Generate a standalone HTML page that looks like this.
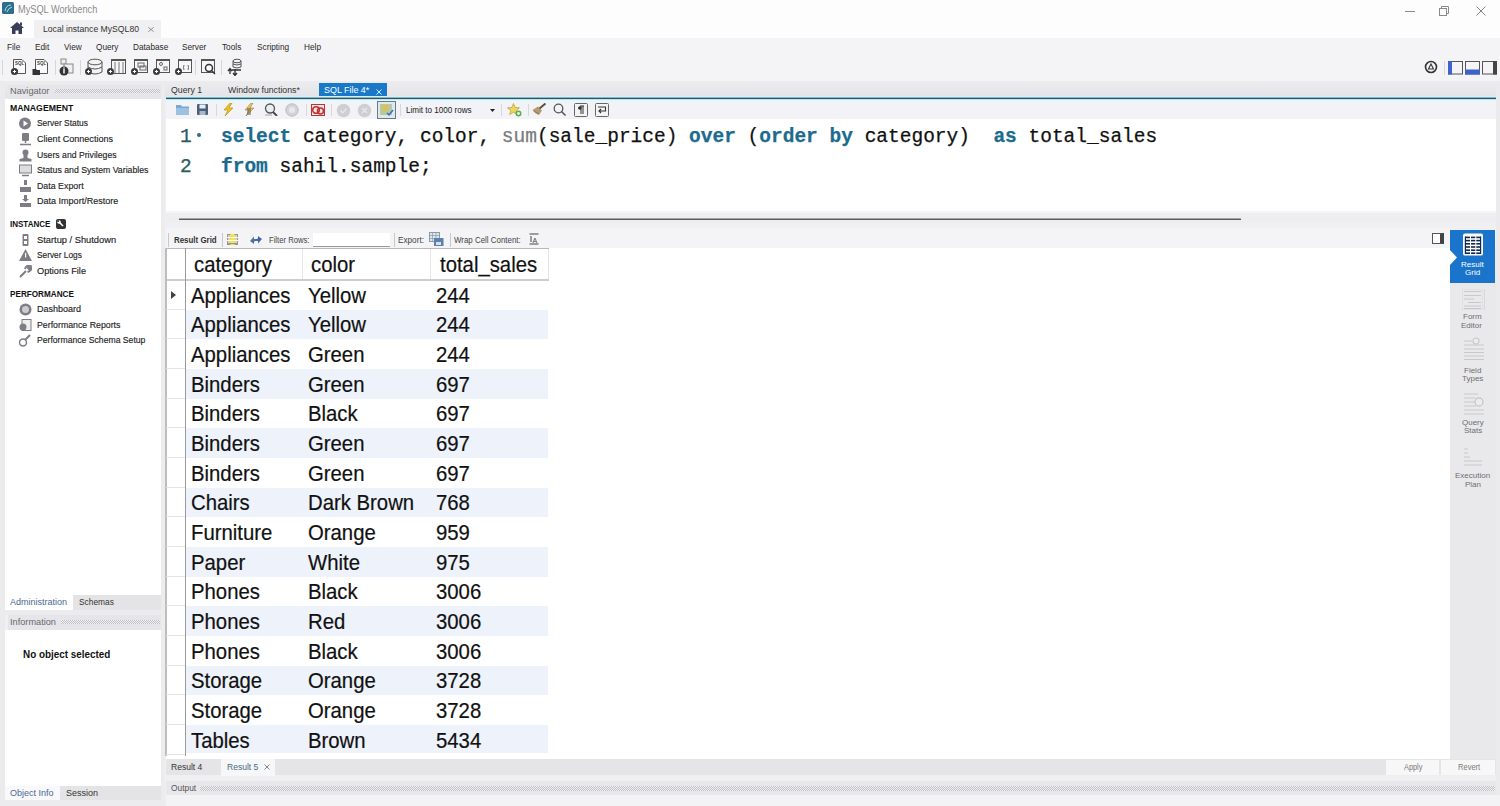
<!DOCTYPE html>
<html><head><meta charset="utf-8"><style>
*{margin:0;padding:0;box-sizing:border-box}
html,body{width:1500px;height:806px;overflow:hidden;background:#f0f0f2;font-family:"Liberation Sans",sans-serif;color:#222}
.a{position:absolute}
.t{position:absolute;white-space:pre;line-height:1}
.mono{font-family:"Liberation Mono",monospace}
.kw{color:#1b6b8e;font-weight:bold}
.fn{color:#7a7a7a}
.g{font-size:21.5px;color:#111;-webkit-text-stroke:0.2px #111;transform:scaleX(0.945);transform-origin:0 0}
.dots{background-image:radial-gradient(circle,#bdbdc2 0.7px,transparent 1px);background-size:3px 3px}
</style></head><body>
<div class="a" style="left:0px;top:0px;width:1500px;height:38px;background:#fdfdfd;"></div>
<svg class="a" style="left:2px;top:2px" width="12" height="12" viewBox="0 0 12 12"><rect x="0" y="0" width="12" height="12" rx="1.5" fill="#2e6e8c"/><path d="M3 9 Q4 3 9 3 M5 10 Q6 6 10 5" stroke="#bfe" stroke-width="0.8" fill="none"/></svg>
<div class="t" style="left:18px;top:4.5px;font-size:10px;color:#8a8a8a;transform:scaleX(0.92);transform-origin:0 0">MySQL Workbench</div>
<div class="a" style="left:1405px;top:11px;width:10px;height:1px;background:#8a8a8a;"></div>
<svg class="a" style="left:1439px;top:6px" width="10" height="10" viewBox="0 0 10 10"><rect x="0.5" y="2.5" width="7" height="7" fill="none" stroke="#8a8a8a"/><path d="M2.5 2.5 V0.5 H9.5 V7.5 H7.5" fill="none" stroke="#8a8a8a"/></svg>
<svg class="a" style="left:1476px;top:6px" width="10" height="10" viewBox="0 0 10 10"><path d="M0.5 0.5 L9.5 9.5 M9.5 0.5 L0.5 9.5" stroke="#808080" stroke-width="1"/></svg>
<div class="a" style="left:34px;top:20px;width:127px;height:19px;background:#f0f0f2;"></div>
<svg class="a" style="left:10px;top:22px" width="14" height="12" viewBox="0 0 14 12"><path d="M7 0 L14 6 L12 6 L12 12 L8.5 12 L8.5 8.5 L5.5 8.5 L5.5 12 L2 12 L2 6 L0 6 Z" fill="#3a3d5a"/><rect x="10" y="0.5" width="2" height="3" fill="#3a3d5a"/></svg>
<div class="t" style="left:43px;top:24px;font-size:9.6px;color:#333;transform:scaleX(0.9);transform-origin:0 0">Local instance MySQL80</div>
<svg class="a" style="left:148px;top:27px" width="6" height="5" viewBox="0 0 6 5"><path d="M0.3 0.3 L5.7 4.7 M5.7 0.3 L0.3 4.7" stroke="#888" stroke-width="0.9"/></svg>
<div class="a" style="left:0px;top:38px;width:1500px;height:43px;background:#f4f4f6;"></div>
<div class="t" style="left:6.5px;top:42px;font-size:9.6px;color:#2a2a2a;transform:scaleX(0.86);transform-origin:0 0">File</div>
<div class="t" style="left:34.5px;top:42px;font-size:9.6px;color:#2a2a2a;transform:scaleX(0.86);transform-origin:0 0">Edit</div>
<div class="t" style="left:63.5px;top:42px;font-size:9.6px;color:#2a2a2a;transform:scaleX(0.86);transform-origin:0 0">View</div>
<div class="t" style="left:95.5px;top:42px;font-size:9.6px;color:#2a2a2a;transform:scaleX(0.86);transform-origin:0 0">Query</div>
<div class="t" style="left:133px;top:42px;font-size:9.6px;color:#2a2a2a;transform:scaleX(0.86);transform-origin:0 0">Database</div>
<div class="t" style="left:182px;top:42px;font-size:9.6px;color:#2a2a2a;transform:scaleX(0.86);transform-origin:0 0">Server</div>
<div class="t" style="left:222px;top:42px;font-size:9.6px;color:#2a2a2a;transform:scaleX(0.86);transform-origin:0 0">Tools</div>
<div class="t" style="left:257px;top:42px;font-size:9.6px;color:#2a2a2a;transform:scaleX(0.86);transform-origin:0 0">Scripting</div>
<div class="t" style="left:304px;top:42px;font-size:9.6px;color:#2a2a2a;transform:scaleX(0.86);transform-origin:0 0">Help</div>
<div class="a" style="left:2px;top:60px;width:1px;height:15px;background:#d6d6d8;"></div>
<div class="a" style="left:55px;top:60px;width:1px;height:15px;background:#d6d6d8;"></div>
<div class="a" style="left:80px;top:60px;width:1px;height:15px;background:#d6d6d8;"></div>
<div class="a" style="left:195px;top:60px;width:1px;height:15px;background:#d6d6d8;"></div>
<div class="a" style="left:221px;top:60px;width:1px;height:15px;background:#d6d6d8;"></div>
<svg class="a" style="left:10px;top:58px" width="20" height="18" viewBox="0 0 20 18"><path d="M3.5 1.5 H12 L15.5 5 V15.5 H3.5 Z" fill="#fafafa" stroke="#555" stroke-width="1"/><text x="5" y="7" font-size="4.5" font-family="Liberation Sans" font-weight="bold" fill="#444">SQL</text><circle cx="4.5" cy="13.5" r="3.6" fill="#3c3c3c"/><path d="M2.9 13.5 H6.1 M4.5 11.9 V15.1" stroke="#fff" stroke-width="1"/></svg>
<svg class="a" style="left:32px;top:58px" width="20" height="18" viewBox="0 0 20 18"><path d="M3.5 1.5 H12 L15.5 5 V15.5 H3.5 Z" fill="#fafafa" stroke="#555" stroke-width="1"/><text x="5" y="7" font-size="4.5" font-family="Liberation Sans" font-weight="bold" fill="#444">SQL</text><path d="M0.5 11 H4 L5 12 H8 V17 H0.5 Z" fill="#333"/></svg>
<svg class="a" style="left:58px;top:58px" width="20" height="18" viewBox="0 0 20 18"><rect x="3" y="1" width="5" height="5" fill="#eee" stroke="#888"/><rect x="6" y="6" width="9" height="9" fill="#eee" stroke="#888"/><circle cx="6" cy="13" r="4.5" fill="#333"/><path d="M6 11 V15.5" stroke="#fff" stroke-width="1.4"/><circle cx="6" cy="10" r="0.8" fill="#fff"/></svg>
<svg class="a" style="left:84px;top:58px" width="20" height="18" viewBox="0 0 20 18"><ellipse cx="11" cy="4" rx="7" ry="2.8" fill="#f3f3f3" stroke="#555"/><path d="M4 4 V14 Q11 18 18 14 V4 M4 9 Q11 13 18 9" fill="none" stroke="#555"/><circle cx="4.5" cy="13.5" r="3.5" fill="#3c3c3c"/><path d="M2.9 13.5 H6.1 M4.5 11.9 V15.1" stroke="#fff" stroke-width="1"/></svg>
<svg class="a" style="left:106px;top:58px" width="20" height="18" viewBox="0 0 20 18"><rect x="5.5" y="1.5" width="14" height="14" fill="#f6f6f6" stroke="#555"/><rect x="5" y="1" width="15" height="2" fill="#555"/><path d="M9 4 V15 M13 4 V15 M17 4 V15" stroke="#777"/><circle cx="4.5" cy="13.5" r="3.5" fill="#3c3c3c"/><path d="M2.9 13.5 H6.1 M4.5 11.9 V15.1" stroke="#fff" stroke-width="1"/></svg>
<svg class="a" style="left:130px;top:58px" width="20" height="18" viewBox="0 0 20 18"><rect x="4.5" y="1.5" width="13" height="13" fill="#f6f6f6" stroke="#555"/><rect x="4" y="1" width="14" height="2" fill="#555"/><rect x="8" y="5" width="6" height="4" fill="none" stroke="#666"/><rect x="10" y="8" width="6" height="4" fill="none" stroke="#666"/><circle cx="4.5" cy="13.5" r="3.5" fill="#3c3c3c"/><path d="M2.9 13.5 H6.1 M4.5 11.9 V15.1" stroke="#fff" stroke-width="1"/></svg>
<svg class="a" style="left:152px;top:58px" width="20" height="18" viewBox="0 0 20 18"><rect x="4.5" y="1.5" width="13" height="13" fill="#f6f6f6" stroke="#555"/><rect x="4" y="1" width="14" height="2" fill="#555"/><circle cx="9" cy="6" r="1.5" fill="none" stroke="#666"/><rect x="12" y="9" width="3" height="3" fill="none" stroke="#666"/><circle cx="4.5" cy="13.5" r="3.5" fill="#3c3c3c"/><path d="M2.9 13.5 H6.1 M4.5 11.9 V15.1" stroke="#fff" stroke-width="1"/></svg>
<svg class="a" style="left:174px;top:58px" width="20" height="18" viewBox="0 0 20 18"><rect x="4.5" y="1.5" width="13" height="13" fill="#f6f6f6" stroke="#555"/><rect x="4" y="1" width="14" height="2" fill="#555"/><path d="M10 7 Q9 9.5 10 12 M14 7 Q15 9.5 14 12" fill="none" stroke="#666"/><circle cx="4.5" cy="13.5" r="3.5" fill="#3c3c3c"/><path d="M2.9 13.5 H6.1 M4.5 11.9 V15.1" stroke="#fff" stroke-width="1"/></svg>
<svg class="a" style="left:200px;top:58px" width="18" height="18" viewBox="0 0 18 18"><rect x="1.5" y="1.5" width="13" height="13" fill="#f6f6f6" stroke="#555"/><rect x="1" y="1" width="14" height="2" fill="#555"/><circle cx="9" cy="10" r="3.5" fill="#fff" stroke="#333" stroke-width="1.5"/><path d="M11.5 12.5 L15 16" stroke="#333" stroke-width="1.5"/></svg>
<svg class="a" style="left:225px;top:58px" width="20" height="18" viewBox="0 0 20 18"><ellipse cx="12" cy="3" rx="4" ry="1.8" fill="#f3f3f3" stroke="#555"/><path d="M8 3 V9 Q12 11 16 9 V3 M8 6 Q12 8 16 6" fill="none" stroke="#555"/><path d="M3 13 L5 10.5 L7 13 M5 11 V16 M7 12 H16 M8 15 L10 17.5 L12 15 M10 11 V17" stroke="#333" stroke-width="1.3" fill="none"/></svg>
<svg class="a" style="left:1424px;top:60px" width="14" height="14" viewBox="0 0 14 14"><circle cx="7" cy="7" r="5.5" fill="none" stroke="#333" stroke-width="1.6"/><path d="M4.5 9 H9.5 L7 4 Z" fill="none" stroke="#333" stroke-width="1.1"/></svg>
<div class="a" style="left:1444px;top:61px;width:1px;height:14px;background:#d8d8d8;"></div>
<svg class="a" style="left:1448px;top:61px" width="16" height="14" viewBox="0 0 16 14"><rect x="0.5" y="0.5" width="14" height="12.5" fill="#f4f4f8" stroke="#555"/><rect x="0" y="0" width="4" height="13.5" fill="#3b63c9"/></svg>
<svg class="a" style="left:1465px;top:61px" width="16" height="14" viewBox="0 0 16 14"><rect x="0.5" y="0.5" width="14" height="12.5" fill="#f4f4f8" stroke="#555"/><rect x="0" y="8.5" width="15" height="5" fill="#3b63c9"/></svg>
<svg class="a" style="left:1482px;top:61px" width="16" height="14" viewBox="0 0 16 14"><rect x="0.5" y="0.5" width="14" height="12.5" fill="#f4f4f8" stroke="#555"/><rect x="11" y="0" width="4" height="13.5" fill="#444"/></svg>
<div class="a" style="left:0px;top:81px;width:1500px;height:17px;background:linear-gradient(#ececef,#e4e4e8);"></div>
<div class="a" style="left:0px;top:81px;width:5px;height:725px;background:#ebebee;"></div>
<div class="a" style="left:8px;top:85px;width:153px;height:14px;background:#e6e6ea;"></div>
<div class="t" style="left:10px;top:87px;font-size:9.2px;color:#686868;">Navigator</div>
<div class="a" style="left:55px;top:89px;width:105px;height:4px;background:transparent;background-image:repeating-conic-gradient(#c2c2c6 0 25%,#f0f0f2 0 50%);background-size:2px 2px"></div>
<div class="a" style="left:5px;top:99px;width:156px;height:496px;background:#ffffff;"></div>
<div class="t" style="left:10px;top:104.0px;font-size:8.8px;color:#111;font-weight:bold;transform:scaleX(0.99);transform-origin:0 0">MANAGEMENT</div>
<div class="t" style="left:37px;top:119.3px;font-size:9.3px;color:#1e1e1e;-webkit-text-stroke:0.15px #1e1e1e;transform:scaleX(0.905);transform-origin:0 0">Server Status</div>
<svg class="a" style="left:19px;top:117px" width="13" height="13" viewBox="0 0 13 13"><circle cx="6" cy="6.5" r="6" fill="#7d7d86"/><path d="M4.5 3.5 L9 6.5 L4.5 9.5 Z" fill="#fff"/></svg>
<div class="t" style="left:37px;top:135.3px;font-size:9.3px;color:#1e1e1e;-webkit-text-stroke:0.15px #1e1e1e;transform:scaleX(0.974);transform-origin:0 0">Client Connections</div>
<svg class="a" style="left:19px;top:133px" width="13" height="13" viewBox="0 0 13 13"><rect x="3" y="0" width="7" height="8" rx="1" fill="#7d7d86"/><path d="M6.5 8 V10 M1 11.5 H12" stroke="#7d7d86" stroke-width="1.5"/></svg>
<div class="t" style="left:37px;top:150.8px;font-size:9.3px;color:#1e1e1e;-webkit-text-stroke:0.15px #1e1e1e;transform:scaleX(0.933);transform-origin:0 0">Users and Privileges</div>
<svg class="a" style="left:19px;top:148.5px" width="13" height="13" viewBox="0 0 13 13"><circle cx="6.5" cy="3.5" r="3" fill="#7d7d86"/><path d="M4.5 6 V9 L0.5 10 V12.5 H12.5 V10 L8.5 9 V6 Z" fill="#7d7d86"/></svg>
<div class="t" style="left:37px;top:166.3px;font-size:9.3px;color:#1e1e1e;-webkit-text-stroke:0.15px #1e1e1e;transform:scaleX(0.939);transform-origin:0 0">Status and System Variables</div>
<svg class="a" style="left:19px;top:164px" width="13" height="13" viewBox="0 0 13 13"><rect x="0.5" y="1" width="12" height="8" fill="#ddd" stroke="#7d7d86"/><path d="M3 11.5 H10" stroke="#7d7d86" stroke-width="1.5"/></svg>
<div class="t" style="left:37px;top:181.8px;font-size:9.3px;color:#1e1e1e;-webkit-text-stroke:0.15px #1e1e1e;transform:scaleX(0.949);transform-origin:0 0">Data Export</div>
<svg class="a" style="left:19px;top:179.5px" width="13" height="13" viewBox="0 0 13 13"><path d="M5 0 H8 V5 H5 Z M1 7 H12 V12 H1 Z" fill="#7d7d86"/></svg>
<div class="t" style="left:37px;top:197.3px;font-size:9.3px;color:#1e1e1e;-webkit-text-stroke:0.15px #1e1e1e;transform:scaleX(0.971);transform-origin:0 0">Data Import/Restore</div>
<svg class="a" style="left:19px;top:195px" width="13" height="13" viewBox="0 0 13 13"><path d="M5 0 H8 V4 H10 L6.5 7 L3 4 H5 Z M1 8 H12 V12 H1 Z" fill="#7d7d86"/></svg>
<div class="t" style="left:10px;top:220.0px;font-size:8.8px;color:#111;font-weight:bold;transform:scaleX(0.911);transform-origin:0 0">INSTANCE</div>
<svg class="a" style="left:56px;top:219px" width="10" height="10" viewBox="0 0 10 10"><rect x="0" y="0" width="10" height="10" rx="2" fill="#333"/><path d="M2.5 2.5 L7 7" stroke="#fff" stroke-width="1.6"/><circle cx="3" cy="3" r="1.8" fill="#fff"/><circle cx="2.2" cy="2.2" r="0.9" fill="#333"/></svg>
<div class="t" style="left:37px;top:235.8px;font-size:9.3px;color:#1e1e1e;-webkit-text-stroke:0.15px #1e1e1e;transform:scaleX(1.0);transform-origin:0 0">Startup / Shutdown</div>
<svg class="a" style="left:19px;top:233.5px" width="13" height="13" viewBox="0 0 13 13"><rect x="3.5" y="0" width="6" height="12" rx="1" fill="#7d7d86"/><rect x="5" y="2" width="3" height="3" fill="#fff"/><rect x="5" y="7" width="3" height="3" fill="#fff"/></svg>
<div class="t" style="left:37px;top:251.3px;font-size:9.3px;color:#1e1e1e;-webkit-text-stroke:0.15px #1e1e1e;transform:scaleX(0.895);transform-origin:0 0">Server Logs</div>
<svg class="a" style="left:19px;top:249px" width="13" height="13" viewBox="0 0 13 13"><path d="M6.5 0 L13 12 H0 Z" fill="#7d7d86"/><rect x="6" y="4" width="1.2" height="4.5" fill="#fff"/></svg>
<div class="t" style="left:37px;top:267.3px;font-size:9.3px;color:#1e1e1e;-webkit-text-stroke:0.15px #1e1e1e;transform:scaleX(0.988);transform-origin:0 0">Options File</div>
<svg class="a" style="left:19px;top:265px" width="13" height="13" viewBox="0 0 13 13"><path d="M1 12 L7 6 M6 4 Q7 0 11 1 L9 3 L10 4 L12 2 Q13 6 8.5 7" stroke="#7d7d86" stroke-width="2" fill="none"/></svg>
<div class="t" style="left:10px;top:289.5px;font-size:8.8px;color:#111;font-weight:bold;transform:scaleX(0.928);transform-origin:0 0">PERFORMANCE</div>
<div class="t" style="left:37px;top:305.3px;font-size:9.3px;color:#1e1e1e;-webkit-text-stroke:0.15px #1e1e1e;transform:scaleX(0.969);transform-origin:0 0">Dashboard</div>
<svg class="a" style="left:19px;top:303px" width="13" height="13" viewBox="0 0 13 13"><circle cx="6.5" cy="6.5" r="6" fill="#7d7d86"/><circle cx="6.5" cy="6.5" r="3.5" fill="#ccc"/></svg>
<div class="t" style="left:37px;top:320.8px;font-size:9.3px;color:#1e1e1e;-webkit-text-stroke:0.15px #1e1e1e;transform:scaleX(0.944);transform-origin:0 0">Performance Reports</div>
<svg class="a" style="left:19px;top:318.5px" width="13" height="13" viewBox="0 0 13 13"><rect x="3" y="0.5" width="9" height="11" fill="#eee" stroke="#7d7d86"/><circle cx="4" cy="8" r="3.5" fill="#7d7d86"/></svg>
<div class="t" style="left:37px;top:336.3px;font-size:9.3px;color:#1e1e1e;-webkit-text-stroke:0.15px #1e1e1e;transform:scaleX(0.928);transform-origin:0 0">Performance Schema Setup</div>
<svg class="a" style="left:19px;top:334px" width="13" height="13" viewBox="0 0 13 13"><circle cx="4" cy="8.5" r="3.5" fill="none" stroke="#7d7d86" stroke-width="1.5"/><path d="M6 6 L11 1" stroke="#7d7d86" stroke-width="2"/></svg>
<div class="a" style="left:5px;top:595px;width:156px;height:15px;background:#e4e4e6;"></div>
<div class="a" style="left:5px;top:595px;width:68px;height:15px;background:#ffffff;"></div>
<div class="t" style="left:10px;top:598px;font-size:9px;color:#4a6890;transform:scaleX(1.0);transform-origin:0 0">Administration</div>
<div class="t" style="left:79px;top:598px;font-size:9px;color:#333;transform:scaleX(0.93);transform-origin:0 0">Schemas</div>
<div class="a" style="left:0px;top:610px;width:161px;height:5px;background:#ebebee;"></div>
<div class="a" style="left:8px;top:615px;width:153px;height:15px;background:#e6e6ea;"></div>
<div class="t" style="left:10px;top:618px;font-size:9.2px;color:#686868;">Information</div>
<div class="a" style="left:61px;top:620px;width:99px;height:4px;background:transparent;background-image:repeating-conic-gradient(#c2c2c6 0 25%,#f0f0f2 0 50%);background-size:2px 2px"></div>
<div class="a" style="left:5px;top:630px;width:156px;height:156px;background:#ffffff;"></div>
<div class="t" style="left:23px;top:649.5px;font-size:10.2px;color:#111;font-weight:bold;transform:scaleX(0.97);transform-origin:0 0">No object selected</div>
<div class="a" style="left:5px;top:786px;width:156px;height:14px;background:#e4e4e6;"></div>
<div class="a" style="left:5px;top:786px;width:55px;height:14px;background:#f9f9fb;"></div>
<div class="t" style="left:10px;top:789px;font-size:9px;color:#4a6890;">Object Info</div>
<div class="t" style="left:66px;top:789px;font-size:9px;color:#333;">Session</div>
<div class="a" style="left:0px;top:800px;width:166px;height:6px;background:#ececef;"></div>
<div class="a" style="left:161px;top:81px;width:4px;height:725px;background:#ececee;"></div>
<div class="t" style="left:171px;top:86px;font-size:9.2px;color:#333;transform:scaleX(0.95);transform-origin:0 0">Query 1</div>
<div class="t" style="left:228px;top:86px;font-size:9.2px;color:#333;transform:scaleX(0.95);transform-origin:0 0">Window functions*</div>
<div class="a" style="left:319px;top:83px;width:68px;height:15px;background:#1a78c9;"></div>
<div class="t" style="left:324px;top:86px;font-size:9.2px;color:#ffffff;transform:scaleX(0.97);transform-origin:0 0">SQL File 4*</div>
<svg class="a" style="left:376px;top:88.5px" width="6" height="6" viewBox="0 0 6 6"><path d="M0.5 0.5 L5.5 5.5 M5.5 0.5 L0.5 5.5" stroke="#d8ecff" stroke-width="1"/></svg>
<div class="a" style="left:166px;top:96px;width:1330px;height:1px;background:#d6f0f8;"></div>
<div class="a" style="left:166px;top:97px;width:1330px;height:1px;background:#8fb3c0;"></div>
<div class="a" style="left:166px;top:98px;width:1330px;height:1px;background:#2a5565;"></div>
<div class="a" style="left:166px;top:99px;width:1330px;height:1px;background:#bfe3ee;"></div>
<div class="a" style="left:166px;top:100px;width:1330px;height:2px;background:#e4f7fb;"></div>
<div class="a" style="left:166px;top:102px;width:1330px;height:17px;background:#f3f3f7;"></div>
<div class="a" style="left:1496px;top:81px;width:4px;height:725px;background:#ebebee;"></div>
<svg class="a" style="left:176px;top:104px" width="13" height="11" viewBox="0 0 13 11"><path d="M0 1 H5 L6 2.5 H13 V11 H0 Z" fill="#7aa7cf"/><rect x="0" y="4" width="13" height="7" fill="#9cc1e3"/></svg>
<svg class="a" style="left:197px;top:104px" width="11" height="11" viewBox="0 0 11 11"><rect x="0" y="0" width="11" height="11" rx="1" fill="#4a5f7a"/><rect x="2.5" y="0.5" width="6" height="4" fill="#e6eef6"/><rect x="2.5" y="7" width="6" height="4" fill="#a8b8c8"/></svg>
<div class="a" style="left:216px;top:104px;width:1px;height:12px;background:#d8d8dc;"></div>
<svg class="a" style="left:222px;top:103px" width="13" height="13" viewBox="0 0 13 13"><path d="M8 0 L2 7 H6 L3 13 L11 5 H7 L10 0 Z" fill="#f0c020" stroke="#b08a10" stroke-width="0.6"/></svg>
<svg class="a" style="left:243px;top:103px" width="13" height="13" viewBox="0 0 13 13"><path d="M8 0 L2 7 H6 L3 13 L11 5 H7 L10 0 Z" fill="#e8c860" stroke="#9a8040" stroke-width="0.6"/><path d="M5 5 V12 M7 5 V12" stroke="#555" stroke-width="1"/></svg>
<svg class="a" style="left:264px;top:103px" width="14" height="13" viewBox="0 0 14 13"><circle cx="6" cy="5.5" r="4.5" fill="#e8eef2" stroke="#555" stroke-width="1.3"/><path d="M9 9 L13 13" stroke="#444" stroke-width="1.8"/><path d="M1 12 H8" stroke="#9aa" stroke-width="1"/></svg>
<svg class="a" style="left:285px;top:103px" width="14" height="14" viewBox="0 0 14 14"><circle cx="7" cy="7" r="6.2" fill="#d4d4d8" stroke="#bbb"/><circle cx="7" cy="7" r="3" fill="#e8e8ea"/></svg>
<div class="a" style="left:306px;top:104px;width:1px;height:12px;background:#d8d8dc;"></div>
<svg class="a" style="left:311px;top:104px" width="14" height="12" viewBox="0 0 14 12"><rect x="0.5" y="0.5" width="13" height="11" fill="#f3e6e6" stroke="#b33"/><circle cx="5" cy="6" r="3.3" fill="none" stroke="#c03030" stroke-width="1.6"/><circle cx="9.5" cy="7" r="3" fill="none" stroke="#c03030" stroke-width="1.6"/></svg>
<div class="a" style="left:331px;top:104px;width:1px;height:12px;background:#d8d8dc;"></div>
<svg class="a" style="left:336px;top:103px" width="15" height="15" viewBox="0 0 15 15"><circle cx="7.5" cy="7.5" r="6.8" fill="#cfcfd3"/><path d="M4.5 7.5 L6.8 9.8 L10.5 5.5" stroke="#e8e8e8" stroke-width="1.3" fill="none"/></svg>
<svg class="a" style="left:357px;top:103px" width="15" height="15" viewBox="0 0 15 15"><circle cx="7.5" cy="7.5" r="6.8" fill="#cfcfd3"/><path d="M5 5 L10 10 M10 5 L5 10" stroke="#e8e8e8" stroke-width="1.3"/></svg>
<svg class="a" style="left:377px;top:101px" width="19" height="18" viewBox="0 0 19 18"><rect x="0.5" y="0.5" width="18" height="17" fill="#dfe7ef" stroke="#6a7a8a"/><rect x="3" y="3" width="12" height="11" fill="#b8c8a0"/><circle cx="8" cy="7" r="3" fill="#e0c050"/><path d="M10 12 L12 14 L16 9" stroke="#3a6fc0" stroke-width="1.5" fill="none"/></svg>
<div class="a" style="left:400px;top:104px;width:1px;height:12px;background:#d8d8dc;"></div>
<div class="t" style="left:406px;top:106px;font-size:9.3px;color:#222;transform:scaleX(0.87);transform-origin:0 0">Limit to 1000 rows</div>
<svg class="a" style="left:490px;top:109px" width="5" height="3" viewBox="0 0 5 3"><path d="M0 0 H5 L2.5 3 Z" fill="#222"/></svg>
<div class="a" style="left:501px;top:104px;width:1px;height:12px;background:#d8d8dc;"></div>
<svg class="a" style="left:507px;top:103px" width="15" height="14" viewBox="0 0 15 14"><path d="M6.5 0.5 L8.3 4.5 L12.5 4.8 L9.3 7.5 L10.3 11.5 L6.5 9.3 L2.7 11.5 L3.7 7.5 L0.5 4.8 L4.7 4.5 Z" fill="#f1d45a" stroke="#a89030" stroke-width="0.6"/><circle cx="11.5" cy="10.5" r="3" fill="#5cae4c"/><circle cx="11.5" cy="10.5" r="1.4" fill="#e8f6e0"/></svg>
<div class="a" style="left:528px;top:104px;width:1px;height:12px;background:#d8d8dc;"></div>
<svg class="a" style="left:532px;top:103px" width="15" height="13" viewBox="0 0 15 13"><path d="M0.5 7 L6 3.5 L10 7.5 L7 12 Q3 11 0.5 7 Z" fill="#b49a70"/><path d="M2 8 L7 11" stroke="#8a7048" stroke-width="0.8"/><path d="M7.5 5.5 L13.5 0.5" stroke="#5a5040" stroke-width="2"/></svg>
<svg class="a" style="left:553px;top:103px" width="14" height="14" viewBox="0 0 14 14"><circle cx="5.5" cy="5.5" r="4.3" fill="none" stroke="#555" stroke-width="1.3"/><path d="M8.5 8.5 L12.5 12.5" stroke="#555" stroke-width="1.6"/></svg>
<svg class="a" style="left:574px;top:103px" width="14" height="14" viewBox="0 0 14 14"><rect x="0.5" y="0.5" width="13" height="13" rx="1" fill="#f4f4f4" stroke="#666"/><path d="M6 3 H10 M7 3 V11 M9 3 V11" stroke="#333" stroke-width="1"/><circle cx="5.8" cy="5" r="1.8" fill="#333"/></svg>
<svg class="a" style="left:595px;top:103px" width="14" height="14" viewBox="0 0 14 14"><rect x="0.5" y="0.5" width="13" height="13" rx="1" fill="#f4f4f4" stroke="#666"/><path d="M3 4 H10.5 V8 H4 M6 6 L4 8 L6 10" stroke="#333" stroke-width="1.1" fill="none"/></svg>
<div class="a" style="left:166px;top:119px;width:1330px;height:92px;background:#ffffff;"></div>
<div class="a" style="left:166px;top:211px;width:1330px;height:2px;background:#f4f4f6;"></div>
<div class="a" style="left:166px;top:213px;width:1330px;height:10px;background:#eeeef0;"></div>
<div class="a" style="left:179px;top:218px;width:1062px;height:1px;background:#a4a4a4;"></div>
<div class="a" style="left:179px;top:219px;width:1062px;height:1px;background:#5c5c5c;"></div>
<div class="a" style="left:166px;top:223px;width:1330px;height:5px;background:#f0f0f2;"></div>
<div class="t mono" style="left:180px;top:128px;font-size:19.5px;-webkit-text-stroke:0.25px currentColor;color:#2b5b60">1</div>
<div class="a" style="left:197px;top:133px;width:4px;height:4px;background:#2f6b88;border-radius:2px"></div>
<div class="t mono" style="left:180px;top:157.5px;font-size:19.5px;-webkit-text-stroke:0.25px currentColor;color:#2b5b60">2</div>
<div class="t mono" style="left:221px;top:128px;font-size:19.5px;-webkit-text-stroke:0.25px currentColor;color:#111"><span class="kw">select</span> category, color, <span class="fn">sum</span>(sale_price) <span class="kw">over</span> (<span class="kw">order</span> <span class="kw">by</span> category)  <span class="kw">as</span> total_sales</div>
<div class="t mono" style="left:221px;top:157.5px;font-size:19.5px;-webkit-text-stroke:0.25px currentColor;color:#111"><span class="kw">from</span> sahil.sample;</div>
<div class="a" style="left:166px;top:228px;width:1284px;height:20px;background:#f4f4f6;"></div>
<div class="a" style="left:168px;top:233px;width:1px;height:14px;background:#c8c8cc;"></div>
<div class="t" style="left:174px;top:236px;font-size:9px;color:#333;font-weight:bold;transform:scaleX(0.88);transform-origin:0 0">Result Grid</div>
<div class="a" style="left:222px;top:233px;width:1px;height:14px;background:#c8c8cc;"></div>
<svg class="a" style="left:227px;top:234px" width="11" height="11" viewBox="0 0 11 11"><rect x="0.5" y="0.5" width="10" height="10" fill="#d8d4c0" stroke="#9a968a"/><rect x="3.5" y="0" width="4" height="11" fill="#f2e64a"/><path d="M0 3.5 H11 M0 6.5 H11" stroke="#fffbe0" stroke-width="1"/><path d="M0 9.5 H11" stroke="#9a968a" stroke-width="1"/></svg>
<svg class="a" style="left:249px;top:234px" width="14" height="12" viewBox="0 0 14 12"><path d="M1 7 L5 2.5 L5 5 Q8 5 9 7 Q7 6.5 5 7.5 L5 10 Z" fill="#4f74a0"/><path d="M13 5 L9 9.5 L9 7 Q6 7 5 5 Q7 5.5 9 4.5 L9 2 Z" fill="#3f66a8"/></svg>
<div class="t" style="left:268.5px;top:236px;font-size:9px;color:#444;transform:scaleX(0.85);transform-origin:0 0">Filter Rows:</div>
<div class="a" style="left:313px;top:232.5px;width:77px;height:14px;background:#ffffff;border-bottom:1px solid #9a9a9a"></div>
<div class="a" style="left:394px;top:233px;width:1px;height:14px;background:#c8c8cc;"></div>
<div class="t" style="left:398px;top:236px;font-size:9px;color:#444;transform:scaleX(0.91);transform-origin:0 0">Export:</div>
<svg class="a" style="left:429px;top:232px" width="15" height="14" viewBox="0 0 15 14"><rect x="0.5" y="0.5" width="10" height="9" fill="#dfe6ee" stroke="#8a9aaa"/><path d="M0 3.5 H10 M0 6.5 H10 M3.5 0 V10 M7 0 V10" stroke="#8a9aaa" stroke-width="0.7"/><rect x="5" y="6" width="9.5" height="8" fill="#5a82aa"/><rect x="7" y="10" width="5" height="3" fill="#dde"/></svg>
<div class="a" style="left:450px;top:233px;width:1px;height:14px;background:#c8c8cc;"></div>
<div class="t" style="left:454px;top:236px;font-size:9px;color:#444;transform:scaleX(0.88);transform-origin:0 0">Wrap Cell Content:</div>
<svg class="a" style="left:529px;top:233px" width="10" height="12" viewBox="0 0 10 12"><path d="M0.5 1 H9.5 M0.5 11 H9.5 M2 3 V9" stroke="#444" stroke-width="1"/><text x="3.5" y="9.5" font-size="7" font-family="Liberation Sans" fill="#444">A</text></svg>
<div class="a" style="left:1432px;top:233px;width:12px;height:11px;background:#ffffff;border:1px solid #555;border-right:4px solid #444"></div>
<div class="a" style="left:166px;top:248px;width:1284px;height:511px;background:#ffffff;"></div>
<div class="a" style="left:165px;top:248px;width:384px;height:1px;background:#b8b8b8;"></div>
<div class="a" style="left:166px;top:279px;width:383px;height:2px;background:#cdcdcd;"></div>
<div class="a" style="left:165px;top:248px;width:2px;height:508px;background:#bdbdbd;"></div>
<div class="a" style="left:185px;top:248px;width:1px;height:508px;background:#9a9a9a;"></div>
<div class="a" style="left:302px;top:249px;width:1px;height:30px;background:#e6e6e6;"></div>
<div class="a" style="left:430px;top:249px;width:1px;height:30px;background:#e6e6e6;"></div>
<div class="a" style="left:548px;top:249px;width:1px;height:30px;background:#e6e6e6;"></div>
<div class="t g" style="left:194px;top:255px">category</div>
<div class="t g" style="left:311px;top:255px">color</div>
<div class="t g" style="left:439.5px;top:255px">total_sales</div>
<div class="a" style="left:166px;top:308.67px;width:19px;height:1px;background:#e4e4e4;"></div>
<div class="t g" style="left:191px;top:285.5px">Appliances</div>
<div class="t g" style="left:308px;top:285.5px">Yellow</div>
<div class="t g" style="left:436px;top:285.5px">244</div>
<div class="a" style="left:186px;top:309.67px;width:362px;height:29.67px;background:#edf2fb;"></div>
<div class="a" style="left:166px;top:338.34px;width:19px;height:1px;background:#e4e4e4;"></div>
<div class="t g" style="left:191px;top:315.17px">Appliances</div>
<div class="t g" style="left:308px;top:315.17px">Yellow</div>
<div class="t g" style="left:436px;top:315.17px">244</div>
<div class="a" style="left:166px;top:368.01px;width:19px;height:1px;background:#e4e4e4;"></div>
<div class="t g" style="left:191px;top:344.84px">Appliances</div>
<div class="t g" style="left:308px;top:344.84px">Green</div>
<div class="t g" style="left:436px;top:344.84px">244</div>
<div class="a" style="left:186px;top:369.01px;width:362px;height:29.67px;background:#edf2fb;"></div>
<div class="a" style="left:166px;top:397.68px;width:19px;height:1px;background:#e4e4e4;"></div>
<div class="t g" style="left:191px;top:374.51px">Binders</div>
<div class="t g" style="left:308px;top:374.51px">Green</div>
<div class="t g" style="left:436px;top:374.51px">697</div>
<div class="a" style="left:166px;top:427.35px;width:19px;height:1px;background:#e4e4e4;"></div>
<div class="t g" style="left:191px;top:404.18px">Binders</div>
<div class="t g" style="left:308px;top:404.18px">Black</div>
<div class="t g" style="left:436px;top:404.18px">697</div>
<div class="a" style="left:186px;top:428.35px;width:362px;height:29.67px;background:#edf2fb;"></div>
<div class="a" style="left:166px;top:457.02px;width:19px;height:1px;background:#e4e4e4;"></div>
<div class="t g" style="left:191px;top:433.85px">Binders</div>
<div class="t g" style="left:308px;top:433.85px">Green</div>
<div class="t g" style="left:436px;top:433.85px">697</div>
<div class="a" style="left:166px;top:486.69px;width:19px;height:1px;background:#e4e4e4;"></div>
<div class="t g" style="left:191px;top:463.52px">Binders</div>
<div class="t g" style="left:308px;top:463.52px">Green</div>
<div class="t g" style="left:436px;top:463.52px">697</div>
<div class="a" style="left:186px;top:487.69px;width:362px;height:29.67px;background:#edf2fb;"></div>
<div class="a" style="left:166px;top:516.36px;width:19px;height:1px;background:#e4e4e4;"></div>
<div class="t g" style="left:191px;top:493.19px">Chairs</div>
<div class="t g" style="left:308px;top:493.19px">Dark Brown</div>
<div class="t g" style="left:436px;top:493.19px">768</div>
<div class="a" style="left:166px;top:546.03px;width:19px;height:1px;background:#e4e4e4;"></div>
<div class="t g" style="left:191px;top:522.86px">Furniture</div>
<div class="t g" style="left:308px;top:522.86px">Orange</div>
<div class="t g" style="left:436px;top:522.86px">959</div>
<div class="a" style="left:186px;top:547.03px;width:362px;height:29.67px;background:#edf2fb;"></div>
<div class="a" style="left:166px;top:575.7px;width:19px;height:1px;background:#e4e4e4;"></div>
<div class="t g" style="left:191px;top:552.53px">Paper</div>
<div class="t g" style="left:308px;top:552.53px">White</div>
<div class="t g" style="left:436px;top:552.53px">975</div>
<div class="a" style="left:166px;top:605.37px;width:19px;height:1px;background:#e4e4e4;"></div>
<div class="t g" style="left:191px;top:582.2px">Phones</div>
<div class="t g" style="left:308px;top:582.2px">Black</div>
<div class="t g" style="left:436px;top:582.2px">3006</div>
<div class="a" style="left:186px;top:606.37px;width:362px;height:29.67px;background:#edf2fb;"></div>
<div class="a" style="left:166px;top:635.04px;width:19px;height:1px;background:#e4e4e4;"></div>
<div class="t g" style="left:191px;top:611.87px">Phones</div>
<div class="t g" style="left:308px;top:611.87px">Red</div>
<div class="t g" style="left:436px;top:611.87px">3006</div>
<div class="a" style="left:166px;top:664.71px;width:19px;height:1px;background:#e4e4e4;"></div>
<div class="t g" style="left:191px;top:641.54px">Phones</div>
<div class="t g" style="left:308px;top:641.54px">Black</div>
<div class="t g" style="left:436px;top:641.54px">3006</div>
<div class="a" style="left:186px;top:665.71px;width:362px;height:29.67px;background:#edf2fb;"></div>
<div class="a" style="left:166px;top:694.38px;width:19px;height:1px;background:#e4e4e4;"></div>
<div class="t g" style="left:191px;top:671.21px">Storage</div>
<div class="t g" style="left:308px;top:671.21px">Orange</div>
<div class="t g" style="left:436px;top:671.21px">3728</div>
<div class="a" style="left:166px;top:724.05px;width:19px;height:1px;background:#e4e4e4;"></div>
<div class="t g" style="left:191px;top:700.88px">Storage</div>
<div class="t g" style="left:308px;top:700.88px">Orange</div>
<div class="t g" style="left:436px;top:700.88px">3728</div>
<div class="a" style="left:186px;top:725.05px;width:362px;height:27.5px;background:#edf2fb;"></div>
<div class="a" style="left:166px;top:753.72px;width:19px;height:1px;background:#e4e4e4;"></div>
<div class="t g" style="left:191px;top:730.55px">Tables</div>
<div class="t g" style="left:308px;top:730.55px">Brown</div>
<div class="t g" style="left:436px;top:730.55px">5434</div>
<svg class="a" style="left:171px;top:291px" width="5" height="8" viewBox="0 0 5 8"><path d="M0 0 L5 4 L0 8 Z" fill="#444"/></svg>
<div class="a" style="left:1450px;top:248px;width:46px;height:511px;background:#e9e9eb;"></div>
<div class="a" style="left:1450px;top:230px;width:45px;height:53px;background:#1a74cb;"></div>
<svg class="a" style="left:1449px;top:249px" width="8" height="17" viewBox="0 0 8 17"><path d="M0 0 L8 8.5 L0 17 Z" fill="#ffffff"/></svg>
<svg class="a" style="left:1462px;top:233px" width="22" height="23" viewBox="0 0 22 23"><rect x="1" y="0.5" width="20" height="22" rx="2" fill="#ffffff"/><rect x="3" y="3.6" width="16" height="1.6" fill="#13294a"/><rect x="3" y="6.8" width="16" height="1.6" fill="#13294a"/><rect x="3" y="10" width="16" height="1.6" fill="#13294a"/><rect x="3" y="13.2" width="16" height="1.6" fill="#13294a"/><rect x="3" y="16.4" width="16" height="1.6" fill="#13294a"/><rect x="3" y="19.4" width="16" height="1.6" fill="#13294a"/><path d="M8.5 3 V21 M13.8 3 V21" stroke="#ffffff" stroke-width="1"/><rect x="2.8" y="3.6" width="1.2" height="17.4" fill="#13294a"/><rect x="18" y="3.6" width="1.2" height="17.4" fill="#13294a"/></svg>
<div class="t" style="left:1461px;top:261px;font-size:8px;color:#ffffff;">Result</div>
<div class="t" style="left:1465px;top:268.5px;font-size:8px;color:#ffffff;">Grid</div>
<svg class="a" style="left:1462px;top:289px" width="24" height="21" viewBox="0 0 24 21"><rect x="0.5" y="0.5" width="20" height="20" fill="none" stroke="#e0e0e3"/><path d="M2 2.5 H19 M2 6.5 H19 M2 10 H12 M6 13.5 H19 M2 17 H19 M2 19.5 H19" stroke="#c8c8cc" stroke-width="1"/><path d="M22.5 0 V21" stroke="#d8d8dc"/></svg>
<div class="t" style="left:1463px;top:313.3px;font-size:8px;color:#6e6e6e;">Form</div>
<div class="t" style="left:1461px;top:321.6px;font-size:8px;color:#6e6e6e;">Editor</div>
<svg class="a" style="left:1462px;top:337px" width="24" height="26" viewBox="0 0 24 26"><path d="M2 4 H10 M2 8 H22 M2 12 H22 M2 15.5 H22 M2 19 H22 M2 22.5 H22" stroke="#c8c8cc" stroke-width="1"/><circle cx="14" cy="4" r="3" fill="#ececee" stroke="#c8c8cc" stroke-width="1.2"/></svg>
<div class="t" style="left:1464px;top:367.3px;font-size:8px;color:#6e6e6e;">Field</div>
<div class="t" style="left:1462px;top:374.8px;font-size:8px;color:#6e6e6e;">Types</div>
<svg class="a" style="left:1462px;top:392px" width="24" height="24" viewBox="0 0 24 24"><path d="M2 2 H16 M2 6 H14 M2 10 H13 M2 14 H14 M2 18 H22 M2 22 H22" stroke="#c8c8cc" stroke-width="1"/><circle cx="17" cy="10" r="4" fill="#ececee" stroke="#c8c8cc" stroke-width="1.3"/></svg>
<div class="t" style="left:1462px;top:418.6px;font-size:8px;color:#6e6e6e;">Query</div>
<div class="t" style="left:1464px;top:426.8px;font-size:8px;color:#6e6e6e;">Stats</div>
<svg class="a" style="left:1462px;top:448px" width="24" height="19" viewBox="0 0 24 19"><path d="M2 1 H6 M2 5 H6 M2 9 H8 M2 13 H20 M2 17 H20" stroke="#c8c8cc" stroke-width="1"/></svg>
<div class="t" style="left:1455px;top:472.3px;font-size:8px;color:#6e6e6e;">Execution</div>
<div class="t" style="left:1465px;top:480.7px;font-size:8px;color:#6e6e6e;">Plan</div>
<div class="a" style="left:166px;top:759px;width:1330px;height:16px;background:#e5e5e7;"></div>
<div class="a" style="left:166px;top:775px;width:1330px;height:6px;background:#efeff1;"></div>
<div class="t" style="left:171px;top:762.5px;font-size:9px;color:#333;transform:scaleX(0.95);transform-origin:0 0">Result 4</div>
<div class="a" style="left:221px;top:759px;width:54px;height:17px;background:#f6f7f8;"></div>
<div class="t" style="left:227px;top:762.5px;font-size:9px;color:#4a6a80;transform:scaleX(0.95);transform-origin:0 0">Result 5</div>
<svg class="a" style="left:264px;top:764px" width="6" height="6" viewBox="0 0 6 6"><path d="M0.5 0.5 L5.5 5.5 M5.5 0.5 L0.5 5.5" stroke="#777" stroke-width="0.9"/></svg>
<div class="a" style="left:1386px;top:760px;width:53px;height:15px;background:#f7f7f8;"></div>
<div class="a" style="left:1441px;top:760px;width:54px;height:15px;background:#f7f7f8;"></div>
<div class="t" style="left:1404px;top:764px;font-size:8.2px;color:#7a7a7a;transform:scaleX(0.9);transform-origin:0 0">Apply</div>
<div class="t" style="left:1458px;top:764px;font-size:8.2px;color:#7a7a7a;transform:scaleX(0.92);transform-origin:0 0">Revert</div>
<div class="a" style="left:166px;top:781px;width:1330px;height:14px;background:#e8e8ea;"></div>
<div class="t" style="left:171px;top:783.5px;font-size:9px;color:#555;transform:scaleX(0.93);transform-origin:0 0">Output</div>
<div class="a" style="left:200px;top:786px;width:1295px;height:5px;background:transparent;background-image:repeating-conic-gradient(#c2c2c6 0 25%,#f0f0f2 0 50%);background-size:2px 2px"></div>
<div class="a" style="left:166px;top:795px;width:1334px;height:11px;background:#f3f3f6;"></div>
</body></html>
